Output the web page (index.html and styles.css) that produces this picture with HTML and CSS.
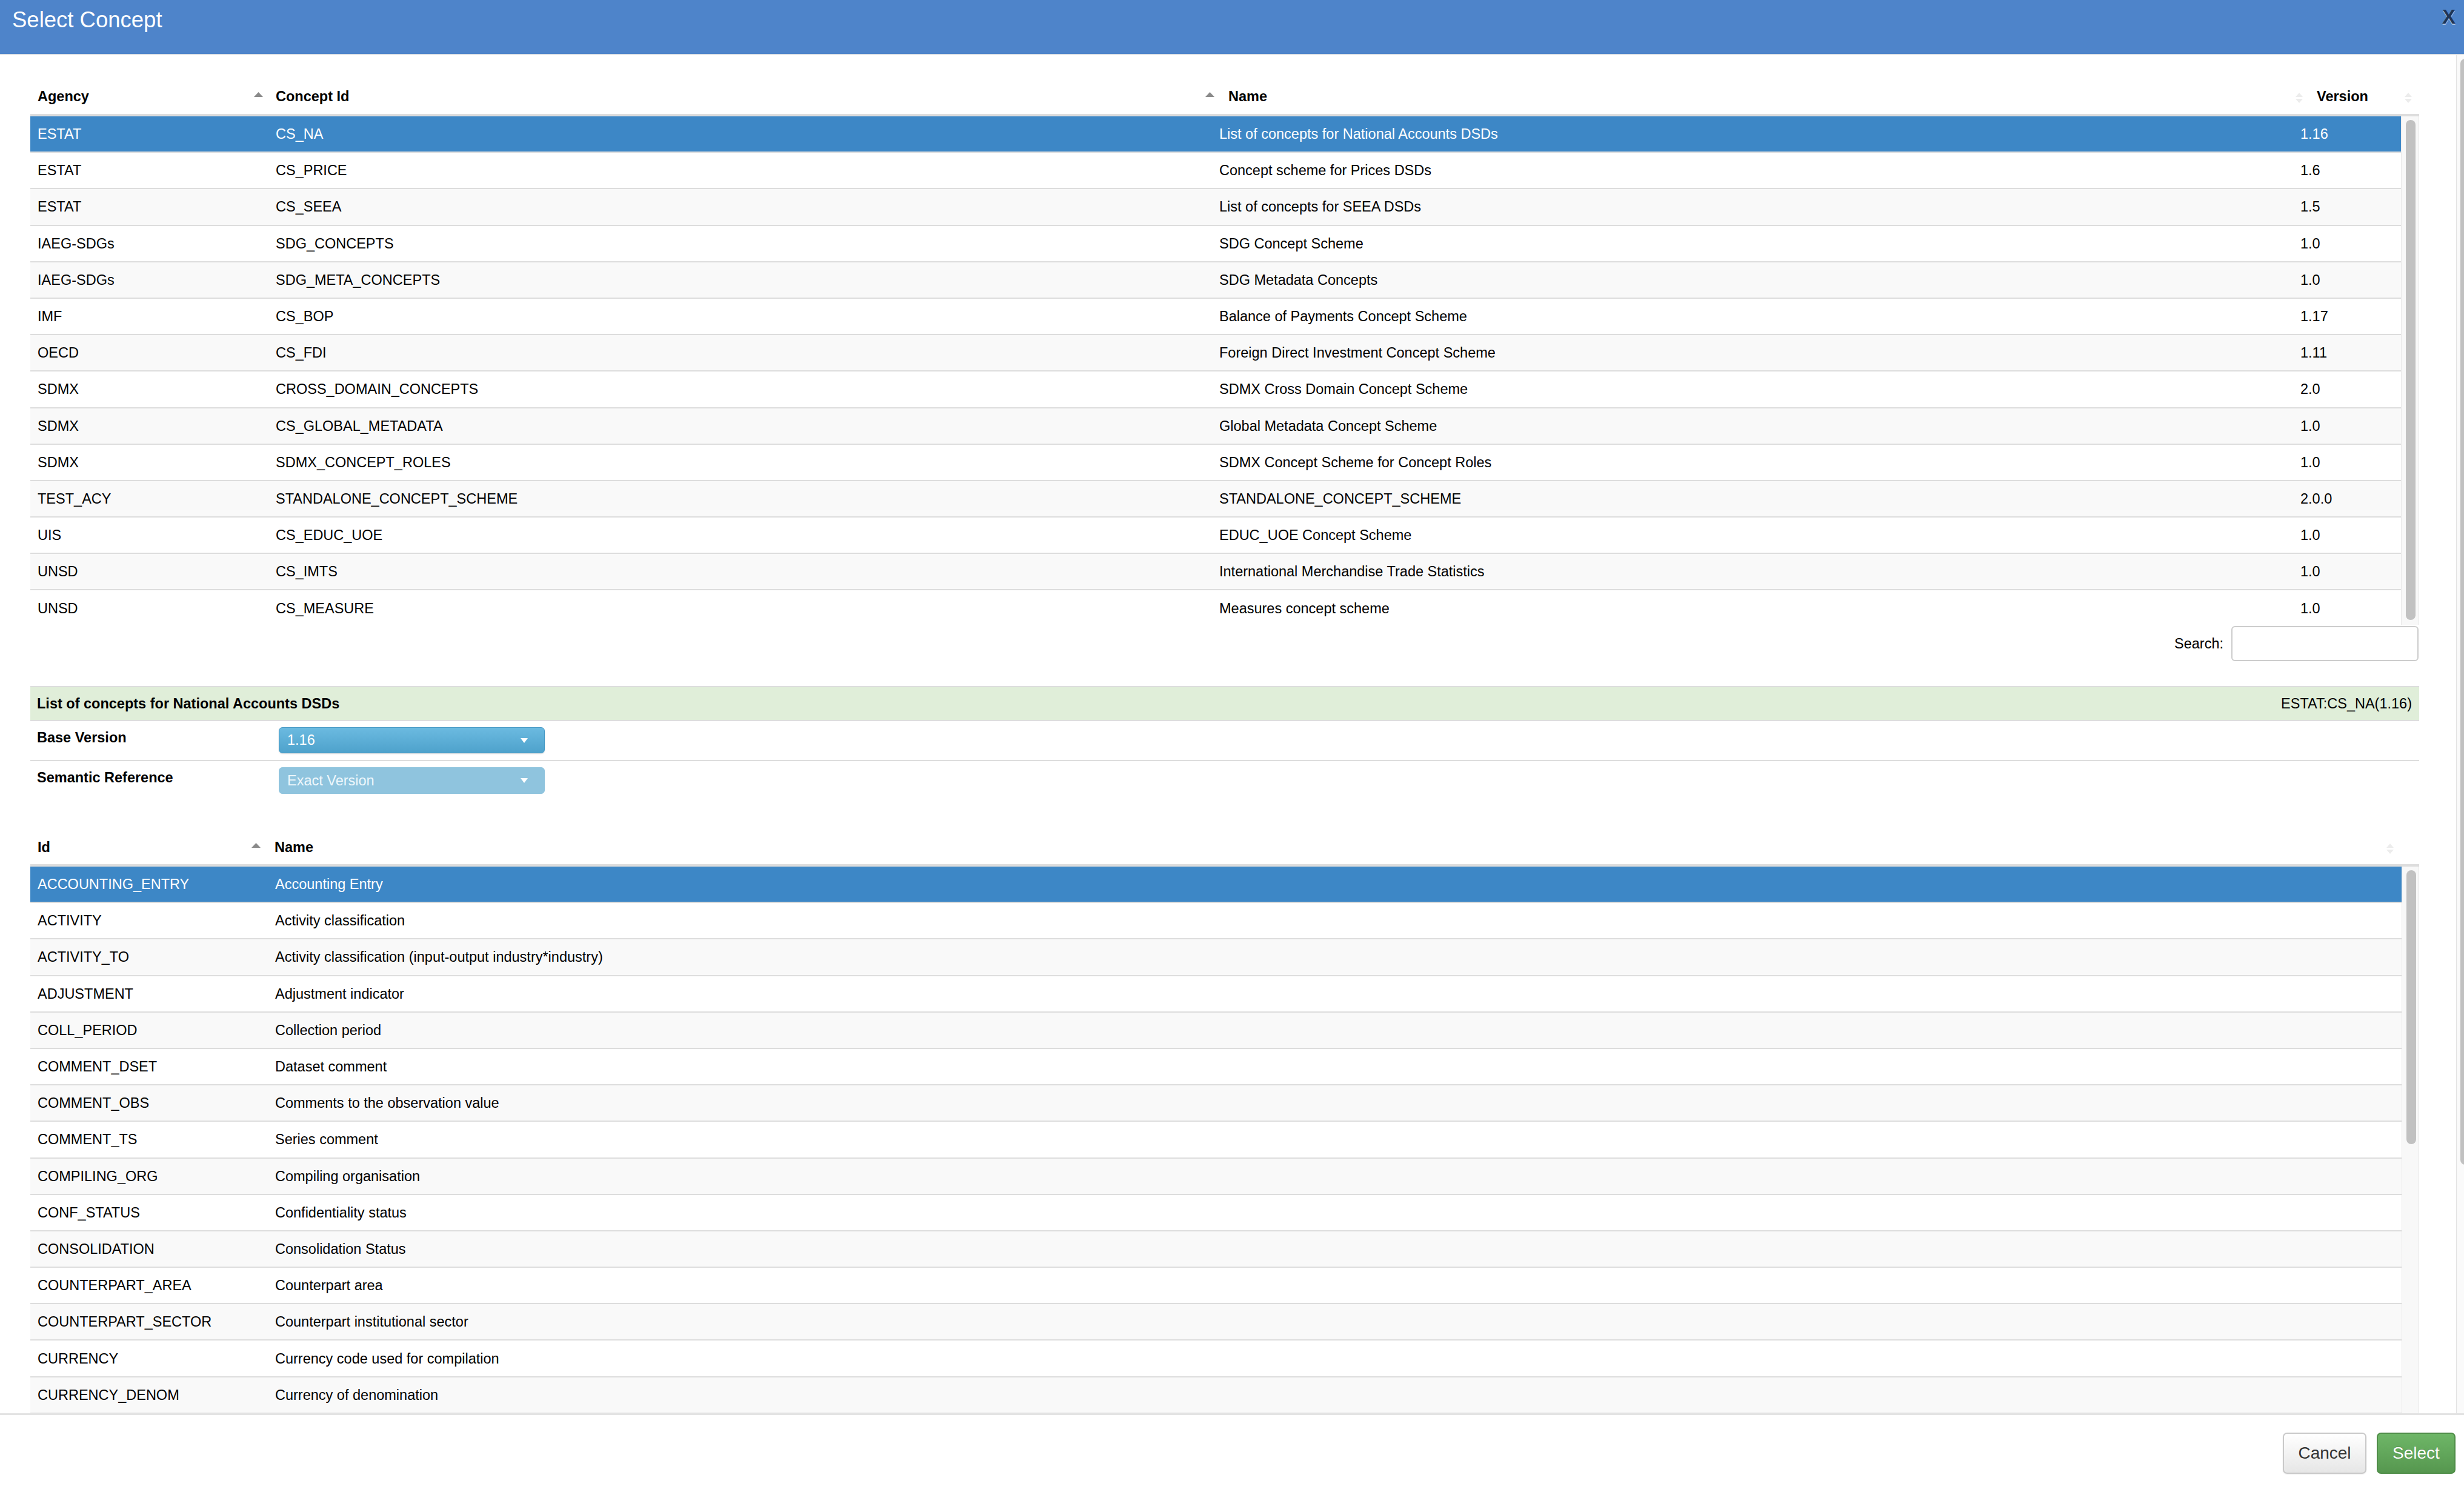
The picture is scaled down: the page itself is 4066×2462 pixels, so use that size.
FILE: index.html
```html
<!DOCTYPE html>
<html lang="en">
<head>
    <meta charset="UTF-8">
    <meta name="viewport" content="width=device-width, initial-scale=1.0">
    <title>Select Concept</title>
    <link rel="stylesheet" href="styles.css">
</head>
<body onload="readAll()">

<div class="modal">
    <div class="modal_header">
        <span class="title">Select Concept</span>
        <span class="close">X</span>
    </div>

    <div class="modal_body">
        <div class="content">

            <div class="grid_head">
                <table>
                    <colgroup><col style="width:393px"><col style="width:1570px"><col style="width:1796px"><col></colgroup>
                    <tr>
                        <th><div class="th_in"><span>Agency</span><svg class="sort" width="15" height="8" viewBox="0 0 15 8"><path d="M7.5 0L15 8H0z" fill="#8a8a8a"/></svg></div></th>
                        <th><div class="th_in"><span>Concept Id</span><svg class="sort" width="15" height="8" viewBox="0 0 15 8"><path d="M7.5 0L15 8H0z" fill="#8a8a8a"/></svg></div></th>
                        <th class="pad14"><div class="th_in"><span>Name</span><svg class="sort both" width="12" height="17" viewBox="0 0 12 17"><path d="M6 0L12 7H0z M6 17L0 10H12z" fill="#ececec"/></svg></div></th>
                        <th class="pad14 last"><div class="th_in"><span>Version</span><svg class="sort both" width="12" height="17" viewBox="0 0 12 17"><path d="M6 0L12 7H0z M6 17L0 10H12z" fill="#ececec"/></svg></div></th>
                    </tr>
                </table>
            </div>
            <div class="grid_body upper">
                <table class="tab_concepts">
                    <colgroup><col style="width:393px"><col style="width:1557px"><col style="width:1784px"><col style="width:178px"></colgroup>
                    <tbody class="schemes_body"></tbody>
                </table>
                <div class="vscroll"><div class="thumb upper_thumb"></div></div>
            </div>

            <div class="search">
                <label>Search:</label>
                <input type="text">
            </div>

            <div class="summary">
                <b>List of concepts for National Accounts DSDs</b>
                <span>ESTAT:CS_NA(1.16)</span>
            </div>
            <div class="field">
                <label>Base Version</label>
                <div class="select">
                    <span>1.16</span>
                    <svg width="12" height="8" viewBox="0 0 12 8"><path d="M0 0H12L6 8z" fill="#fff"/></svg>
                </div>
            </div>
            <div class="field no_border">
                <label>Semantic Reference</label>
                <div class="select disabled">
                    <span>Exact Version</span>
                    <svg width="12" height="8" viewBox="0 0 12 8"><path d="M0 0H12L6 8z" fill="#fff"/></svg>
                </div>
            </div>

            <div class="grid_head items_head">
                <table>
                    <colgroup><col style="width:389px"><col></colgroup>
                    <tr>
                        <th><div class="th_in"><span>Id</span><svg class="sort" width="15" height="8" viewBox="0 0 15 8"><path d="M7.5 0L15 8H0z" fill="#8a8a8a"/></svg></div></th>
                        <th class="pad14 name_th"><div class="th_in"><span>Name</span><svg class="sort both" width="12" height="17" viewBox="0 0 12 17"><path d="M6 0L12 7H0z M6 17L0 10H12z" fill="#ececec"/></svg></div></th>
                    </tr>
                </table>
            </div>
            <div class="grid_body lower">
                <table class="tab_items">
                    <colgroup><col style="width:392px"><col></colgroup>
                    <tbody class="items_body"></tbody>
                </table>
                <div class="vscroll"><div class="thumb lower_thumb"></div></div>
            </div>

        </div>
        <div class="page_scroll"><div class="thumb page_thumb"></div></div>
    </div>

    <div class="modal_footer">
        <button type="button" class="btn cancel">Cancel</button>
        <button type="button" class="btn select_btn">Select</button>
    </div>
</div>

<script>
    let schemes = [
        ["ESTAT", "CS_NA", "List of concepts for National Accounts DSDs", "1.16"],
        ["ESTAT", "CS_PRICE", "Concept scheme for Prices DSDs", "1.6"],
        ["ESTAT", "CS_SEEA", "List of concepts for SEEA DSDs", "1.5"],
        ["IAEG-SDGs", "SDG_CONCEPTS", "SDG Concept Scheme", "1.0"],
        ["IAEG-SDGs", "SDG_META_CONCEPTS", "SDG Metadata Concepts", "1.0"],
        ["IMF", "CS_BOP", "Balance of Payments Concept Scheme", "1.17"],
        ["OECD", "CS_FDI", "Foreign Direct Investment Concept Scheme", "1.11"],
        ["SDMX", "CROSS_DOMAIN_CONCEPTS", "SDMX Cross Domain Concept Scheme", "2.0"],
        ["SDMX", "CS_GLOBAL_METADATA", "Global Metadata Concept Scheme", "1.0"],
        ["SDMX", "SDMX_CONCEPT_ROLES", "SDMX Concept Scheme for Concept Roles", "1.0"],
        ["TEST_ACY", "STANDALONE_CONCEPT_SCHEME", "STANDALONE_CONCEPT_SCHEME", "2.0.0"],
        ["UIS", "CS_EDUC_UOE", "EDUC_UOE Concept Scheme", "1.0"],
        ["UNSD", "CS_IMTS", "International Merchandise Trade Statistics", "1.0"],
        ["UNSD", "CS_MEASURE", "Measures concept scheme", "1.0"]
    ];

    let items = [
        ["ACCOUNTING_ENTRY", "Accounting Entry"],
        ["ACTIVITY", "Activity classification"],
        ["ACTIVITY_TO", "Activity classification (input-output industry*industry)"],
        ["ADJUSTMENT", "Adjustment indicator"],
        ["COLL_PERIOD", "Collection period"],
        ["COMMENT_DSET", "Dataset comment"],
        ["COMMENT_OBS", "Comments to the observation value"],
        ["COMMENT_TS", "Series comment"],
        ["COMPILING_ORG", "Compiling organisation"],
        ["CONF_STATUS", "Confidentiality status"],
        ["CONSOLIDATION", "Consolidation Status"],
        ["COUNTERPART_AREA", "Counterpart area"],
        ["COUNTERPART_SECTOR", "Counterpart institutional sector"],
        ["CURRENCY", "Currency code used for compilation"],
        ["CURRENCY_DENOM", "Currency of denomination"]
    ];

    function rows(list) {
        let elements = "";
        list.forEach((record, i) => {
            elements += `<tr class="${i === 0 ? "selected" : ""}">`;
            record.forEach(cell => { elements += `<td>${cell}</td>`; });
            elements += `</tr>`;
        });
        return elements;
    }

    function readAll() {
        document.querySelector(".schemes_body").innerHTML = rows(schemes);
        document.querySelector(".items_body").innerHTML = rows(items);
    }
</script>

</body>
</html>
```

FILE: styles.css
```css
* {
    box-sizing: border-box;
}
body {
    margin: 0;
    font-family: "Liberation Sans", Arial, sans-serif;
    font-size: 23.5px;
    color: #000;
}
.modal {
    height: 100vh;
    display: flex;
    flex-direction: column;
    overflow: hidden;
}

/* header */
.modal_header {
    flex-shrink: 0;
    height: 91px;
    background-color: #4e84ca;
    border-bottom: 2px solid #dde1e6;
    display: flex;
    justify-content: space-between;
    align-items: flex-start;
    padding: 13px 14px 0 20px;
}
.title {
    color: #fff;
    font-size: 36.5px;
    line-height: 40px;
}
.close {
    color: #1f3556;
    font-weight: bold;
    font-size: 33px;
    line-height: 40px;
    margin-top: -5px;
    text-shadow: 0 2px 0 #a9c3e6;
}

/* body */
.modal_body {
    flex: 1;
    min-height: 0;
    display: flex;
    overflow: hidden;
}
.content {
    flex: 1;
    min-width: 0;
    padding: 39px 61px 0 50px;
    overflow: hidden;
}
.page_scroll {
    width: 13px;
    flex-shrink: 0;
    border-left: 1px solid #e2e2e2;
    background-color: #fafafa;
    overflow: hidden;
}
.thumb {
    width: 16px;
    background-color: #c1c1c1;
    border-radius: 8px;
}
.page_thumb {
    margin: 6px 0 0 6px;
    height: 1825px;
}

/* tables */
table {
    border-spacing: 0;
    table-layout: fixed;
}
.grid_head {
    border-bottom: 4px solid #ddd;
}
.grid_head table {
    width: 100%;
}
th {
    text-align: left;
    font-weight: bold;
    line-height: 26px;
    padding: 16px 9px 16px 12px;
    vertical-align: top;
}
th.pad14 { padding-left: 14px; }
th.last { padding-right: 12px; }
.th_in {
    display: flex;
    justify-content: space-between;
    align-items: flex-start;
}
.sort {
    flex-shrink: 0;
    margin-top: 6px;
}
.sort.both { margin-top: 7px; }

.grid_body {
    display: flex;
    overflow: hidden;
}
.grid_body.upper { height: 839px; }
.grid_body.lower { height: 1200px; }
.grid_body table {
    flex-shrink: 0;
    align-self: flex-start;
}
.tab_concepts { width: 3912px; }
.tab_items { width: 3913px; }
td {
    padding: 16.1px 12px;
    line-height: 26px;
    border-bottom: 2px solid #ddd;
    white-space: nowrap;
}
tr:nth-child(odd) td { background-color: #f9f9f9; }
tr.selected td {
    background-color: #3d87c6;
    color: #fff;
}
.vscroll {
    flex: 1;
    background-color: #f8f8f8;
    border-left: 1px solid #e8e8e8;
    border-right: 1px solid #e8e8e8;
}
.vscroll .thumb { margin: 6px 0 0 7px; }
.upper_thumb { height: 825px; }
.lower_thumb { height: 452px; }

.search {
    display: flex;
    justify-content: flex-end;
    align-items: center;
    gap: 13px;
    margin-top: 2px;
    padding-right: 1px;
}
.search input {
    width: 309px;
    height: 58px;
    border: 2px solid #ccc;
    border-radius: 6px;
    margin: 0;
}

/* selected scheme */
.summary {
    margin-top: 41px;
    display: flex;
    justify-content: space-between;
    background-color: #e0eed9;
    border-top: 2px solid #ddd;
    border-bottom: 2px solid #ddd;
    padding: 14px 12px 14px 11px;
    line-height: 26px;
}
.field {
    display: flex;
    align-items: flex-start;
    height: 66px;
    padding-top: 10px;
    border-bottom: 2px solid #ddd;
}
.field.no_border {
    height: 64px;
    border-bottom: none;
}
.field label {
    width: 410px;
    padding: 4px 0 0 11px;
    font-weight: bold;
    line-height: 26px;
}
.select {
    width: 439px;
    height: 43px;
    border-radius: 6px;
    border: 1px solid #4599c6;
    background: linear-gradient(#6bbae0, #4ea2cc);
    box-shadow: 0 1px 2px rgba(0, 0, 0, 0.15);
    color: #fff;
    display: flex;
    align-items: center;
    justify-content: space-between;
    padding: 0 27px 0 13px;
}
.select.disabled {
    height: 44px;
    background: #8fc4de;
    border-color: #8fc4de;
    box-shadow: none;
    color: #eef7fc;
}

.items_head { margin-top: 50px; }
.items_head th {
    padding-top: 15px;
    padding-bottom: 15px;
}
.items_head th.name_th { padding-right: 42px; }

/* footer */
.modal_footer {
    flex-shrink: 0;
    height: 130px;
    border-top: 3px solid #e3e3e3;
    display: flex;
    justify-content: flex-end;
    align-items: flex-start;
    gap: 17px;
    padding: 29px 14px 0 0;
}
.btn {
    height: 68px;
    font-family: "Liberation Sans", Arial, sans-serif;
    font-size: 28px;
    border-radius: 7px;
    padding: 0;
}
.cancel {
    width: 138px;
    color: #333;
    background: linear-gradient(#fff, #e6e6e6);
    border: 2px solid #c9c9c9;
    box-shadow: 0 1px 2px rgba(0, 0, 0, 0.08);
}
.select_btn {
    width: 130px;
    color: #fff;
    background: linear-gradient(#6eb667, #56974f);
    border: 2px solid #4f8d48;
    text-shadow: 0 -1px 0 rgba(0, 0, 0, 0.2);
}
```
